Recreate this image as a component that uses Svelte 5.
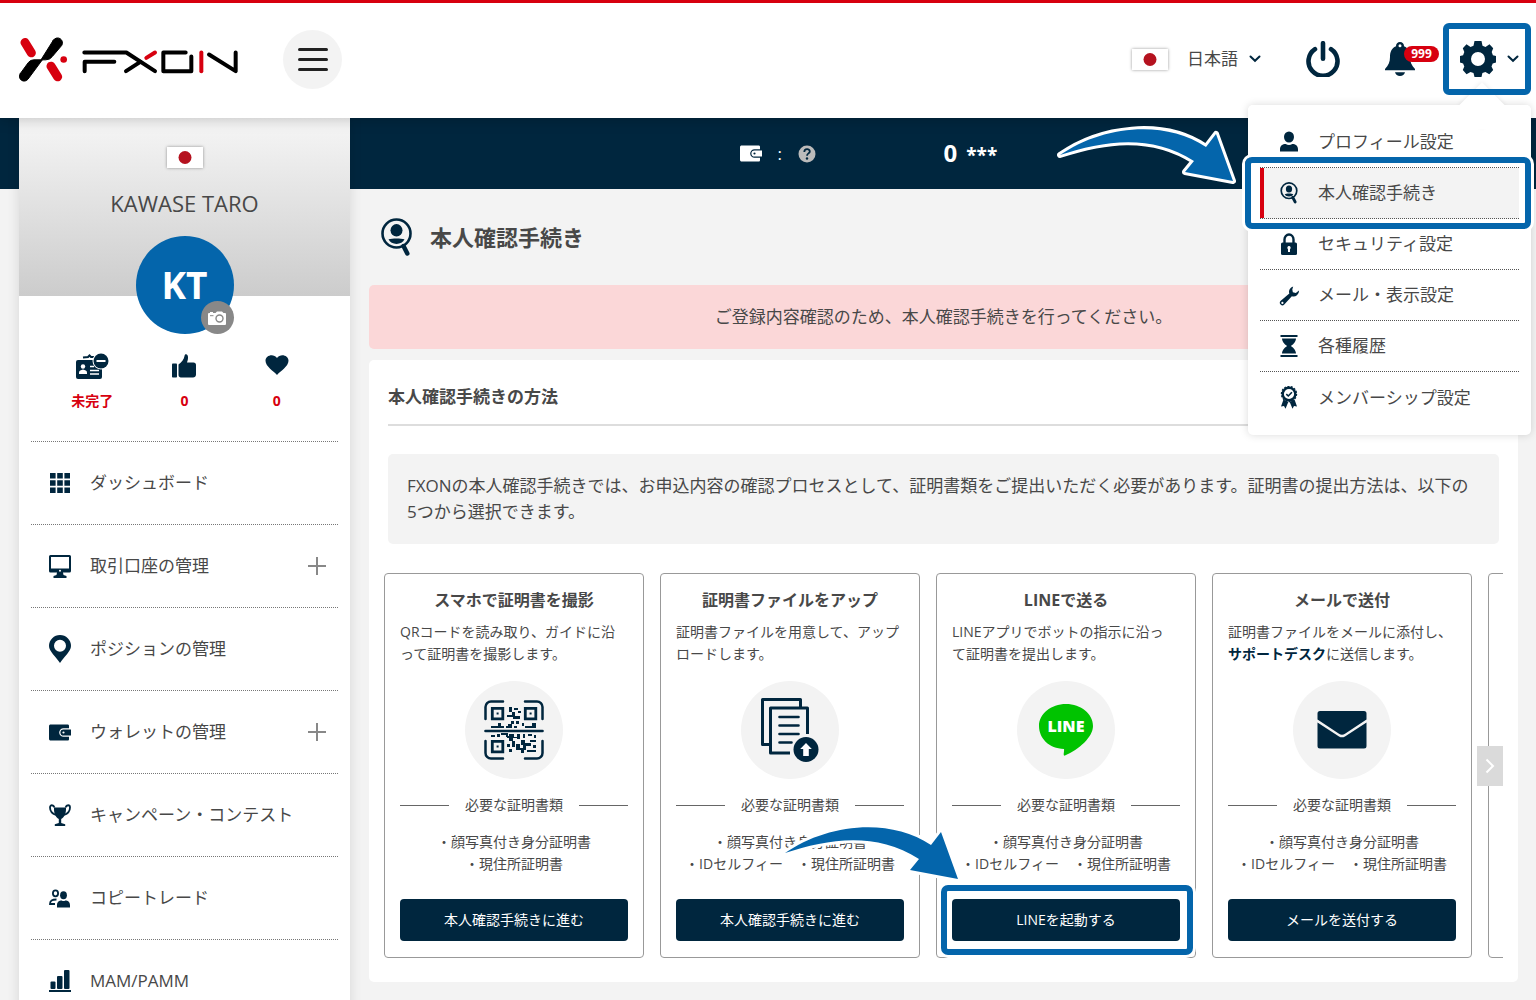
<script>
  let menuOpen = $state(true);
  let language = $state('ja');

  const settingsItems = [
    { icon: 'person', label: 'プロフィール設定' },
    { icon: 'verify', label: '本人確認手続き', active: true },
    { icon: 'lock', label: 'セキュリティ設定' },
    { icon: 'wrench', label: 'メール・表示設定' },
    { icon: 'hourglass', label: '各種履歴' },
    { icon: 'award', label: 'メンバーシップ設定' },
  ];

  const stats = [
    { icon: 'idcard', value: '未完了' },
    { icon: 'thumb', value: '0' },
    { icon: 'heart', value: '0' },
  ];

  const navItems = [
    { icon: 'grid', label: 'ダッシュボード' },
    { icon: 'monitor', label: '取引口座の管理', expandable: true },
    { icon: 'pin', label: 'ポジションの管理' },
    { icon: 'wallet', label: 'ウォレットの管理', expandable: true },
    { icon: 'trophy', label: 'キャンペーン・コンテスト' },
    { icon: 'people', label: 'コピートレード' },
    { icon: 'chart', label: 'MAM/PAMM' },
  ];

  const methods = [
    {
      icon: 'qr',
      title: 'スマホで証明書を撮影',
      text: 'QRコードを読み取り、ガイドに沿って証明書を撮影します。',
      docs: ['・顔写真付き身分証明書', '・現住所証明書'],
      action: '本人確認手続きに進む',
    },
    {
      icon: 'files',
      title: '証明書ファイルをアップ',
      text: '証明書ファイルを用意して、アップロードします。',
      docs: ['・顔写真付き身分証明書', '・IDセルフィー　・現住所証明書'],
      action: '本人確認手続きに進む',
    },
    {
      icon: 'line',
      title: 'LINEで送る',
      text: 'LINEアプリでボットの指示に沿っ\nて証明書を提出します。',
      docs: ['・顔写真付き身分証明書', '・IDセルフィー　・現住所証明書'],
      action: 'LINEを起動する',
      highlight: true,
    },
    {
      icon: 'mail',
      title: 'メールで送付',
      text: '証明書ファイルをメールに添付し、',
      link: 'サポートデスク',
      textAfter: 'に送信します。',
      docs: ['・顔写真付き身分証明書', '・IDセルフィー　・現住所証明書'],
      action: 'メールを送付する',
    },
  ];

  function scrollCards(direction) {
    const track = document.querySelector('.cards');
    track.scrollBy({ left: direction * track.clientWidth, behavior: 'smooth' });
  }
</script>

{#snippet flag()}
  <svg class="flag" viewBox="0 0 36 21" width="36" height="21" aria-hidden="true">
    <rect width="36" height="21" fill="#fff" />
    <circle cx="18" cy="10.5" r="6.5" fill="#b5121f" />
  </svg>
{/snippet}

{#snippet chevron()}
  <svg viewBox="0 0 12 8" width="12" height="8" aria-hidden="true">
    <path d="M1.5 1.5 6 5.8 10.5 1.5" fill="none" stroke="#00263e" stroke-width="2" stroke-linecap="round" />
  </svg>
{/snippet}

{#snippet arrow()}
  <svg class="arrow" viewBox="0 0 184 64" width="184" height="64" aria-hidden="true">
    <path
      d="M5 31C45 3 108-6 151 23L161 10 178 57 130 48 139 37C95 9 48 17 5 31Z"
      fill="#0465ab" stroke="#fff" stroke-width="6" stroke-linejoin="round" paint-order="stroke" />
  </svg>
{/snippet}

{#snippet icon(name, size)}
  {#if name === 'person'}
    <svg viewBox="0 0 20 22" width={size} height={size}>
      <ellipse cx="10" cy="6" rx="5" ry="5.6" />
      <path d="M1 20.5v-2.2c0-3.6 2.6-5.3 5.7-5.3 2 1.4 4.6 1.4 6.6 0 3.1 0 5.7 1.7 5.7 5.3v2.2Z" />
    </svg>
  {:else if name === 'verify'}
    <svg viewBox="0 0 31 39" width={size} height={size}>
      <circle cx="15.5" cy="15.5" r="13.8" fill="none" stroke="currentColor" stroke-width="3" />
      <ellipse cx="15.5" cy="12.5" rx="5.5" ry="6.3" />
      <path d="M8 22.3c2-2.3 13-2.3 15 0-2 4.7-13 4.7-15 0Z" />
      <path d="M22 27l4.5 8.5" stroke="currentColor" stroke-width="5" stroke-linecap="round" />
    </svg>
  {:else if name === 'lock'}
    <svg viewBox="0 0 18 22" width={size} height={size}>
      <path d="M4.5 11V6.5a4.5 5 0 0 1 9 0V11" fill="none" stroke="currentColor" stroke-width="2.4" />
      <rect x="1" y="9.5" width="16" height="12.5" rx="1.5" />
      <path d="M9 13a1.8 1.8 0 0 0-1 3.2V19h2v-2.8A1.8 1.8 0 0 0 9 13Z" fill="#fff" />
    </svg>
  {:else if name === 'wrench'}
    <svg viewBox="0 0 20 20" width={size} height={size}>
      <path fill-rule="evenodd" d="M13.8 2.2a5 5 0 0 0-3.5 6.5L2.5 15.3a2.3 2.3 0 1 0 3.2 3.3l6.9-7.5a5 5 0 0 0 6.5-5.2l-2.9 2.3-2.7-.7-.5-2.4ZM4 16.2a1 1 0 1 1 0 2 1 1 0 0 1 0-2Z" />
    </svg>
  {:else if name === 'hourglass'}
    <svg viewBox="0 0 18 22" width={size} height={size}>
      <path d="M.5 0h17v2H.5ZM.5 20h17v2H.5ZM2 3.5h14c-.3 4-3 5.8-5 7.5 2 1.7 4.7 3.5 5 7.5H2c.3-4 3-5.8 5-7.5C5 9.3 2.3 7.5 2 3.5Z" />
    </svg>
  {:else if name === 'award'}
    <svg viewBox="0 0 18 23" width={size} height="23">
      <circle cx="9" cy="8" r="6.3" fill="none" stroke="currentColor" stroke-width="2.4" />
      <circle cx="9" cy="8" r="7.6" fill="none" stroke="currentColor" stroke-width="1.2" stroke-dasharray="2 1.4" />
      <path d="M6.3 8.2 8.3 10l3.6-3.8" fill="none" stroke="currentColor" stroke-width="1.6" />
      <path d="M3.5 13.5 1 20.5l3-.5 1.5 2.7L8.3 16ZM14.5 13.5l2.5 7-3-.5-1.5 2.7L9.7 16Z" />
    </svg>
  {:else if name === 'idcard'}
    <svg viewBox="0 0 33 27" width="33" height="27">
      <path d="M7 4.5 12 4l1.5-1.5L15 4h3" fill="none" stroke="currentColor" stroke-width="2" />
      <rect y="7" width="26" height="19" rx="2" />
      <circle cx="25" cy="8" r="8.5" fill="#fff" />
      <circle cx="25" cy="8" r="7.5" />
      <rect x="20.5" y="7" width="9" height="2" fill="#fff" />
      <circle cx="7" cy="13.5" r="2.2" fill="#fff" />
      <path d="M3 21v-1.5c0-2 2-2.5 4-3 2 .5 4 1 4 3V21Z" fill="#fff" />
      <path d="M14 13.5h4M14 17.5h9M14 21h9" stroke="#fff" stroke-width="1.5" />
    </svg>
  {:else if name === 'thumb'}
    <svg viewBox="0 0 24 24" width="24" height="24">
      <rect y="9.5" width="5" height="14" rx=".8" />
      <path d="M6.5 10.5c3-2 5.5-5 6-8.5.2-1.7 1.2-2 2.2-1.5 2 1 1.5 5 .3 8h6.5c1.600 0 2.5 1 2.5 2.5v9.5c0 2-1.3 3-3 3H10c-2 0-3.5-.6-3.5-2.5Z" />
    </svg>
  {:else if name === 'heart'}
    <svg viewBox="0 0 24 24" width="24" height="24">
      <path d="M12 21C9 17.5.5 12.5.5 6.8.5 1.2 8.5-1 12 4c3.5-5 11.5-2.8 11.5 2.8C23.5 12.5 15 17.5 12 21Z" />
    </svg>
  {:else if name === 'grid'}
    <svg viewBox="0 0 20 20" width="20" height="20">
      <path d="M0 0h5.6v5.6H0ZM7.2 0h5.6v5.6H7.2ZM14.4 0H20v5.6h-5.6ZM0 7.2h5.6v5.6H0ZM7.2 7.2h5.6v5.6H7.2ZM14.4 7.2H20v5.6h-5.6ZM0 14.4h5.6V20H0ZM7.2 14.4h5.6V20H7.2ZM14.4 14.4H20V20h-5.6Z" />
    </svg>
  {:else if name === 'monitor'}
    <svg viewBox="0 0 22 23" width="22" height="23">
      <path fill-rule="evenodd" d="M1.5 0h19A1.5 1.5 0 0 1 22 1.5V16a1.5 1.5 0 0 1-1.5 1.5H14l.5 2.5 3 1v2h-13v-2l3-1 .5-2.5H1.5A1.5 1.5 0 0 1 0 16V1.5A1.5 1.5 0 0 1 1.5 0ZM2 2v11.5h18V2ZM11 14.8a1 1 0 1 0 0 2 1 1 0 0 0 0-2Z" />
    </svg>
  {:else if name === 'pin'}
    <svg viewBox="0 0 22 28" width="22" height="28">
      <path fill-rule="evenodd" d="M11 0a11 11 0 0 1 11 11c0 5.5-7 10.5-11 17C7 21.5 0 16.5 0 11A11 11 0 0 1 11 0ZM11 4.7a6 6 0 1 0 0 12 6 6 0 0 0 0-12Z" />
    </svg>
  {:else if name === 'wallet'}
    <svg viewBox="0 0 22 17" width="22" height="17">
      <path d="M2 .5h16.5c1 0 1.5.5 1.5 1.5v2.2h-5.5a4.3 4.3 0 0 0 0 8.6H20V15c0 1-.5 1.5-1.5 1.5H2c-1.5 0-2-.5-2-2v-12C0 1 .5.5 2 .5Z" />
      <path fill-rule="evenodd" d="M14.5 5.4H22v6.2h-7.5a3.1 3.1 0 0 1 0-6.2Zm0 2a1.1 1.1 0 1 0 0 2.2 1.1 1.1 0 0 0 0-2.2Z" />
    </svg>
  {:else if name === 'trophy'}
    <svg viewBox="0 0 22 22" width="22" height="22">
      <path d="M5 3.5h12c.3 6-1.500 9.5-4.8 11.5v4l4 1.3V22H5.8v-1.7l4-1.3v-4C6.5 13 4.7 9.5 5 3.5Z" />
      <path d="M5.5 3.5C4.5.5 1 .5 1 3.5c0 3.5 2 6 6 7.5M16.5 3.5c1-3 4.5-3 4.5 0 0 3.500-2 6-6 7.5" fill="none" stroke="currentColor" stroke-width="1.8" />
    </svg>
  {:else if name === 'people'}
    <svg viewBox="0 0 21 19" width="21" height="19">
      <ellipse cx="6.5" cy="4.3" rx="2.6" ry="3" fill="none" stroke="currentColor" stroke-width="1.8" />
      <path d="M7.5 10.5C3 10.5 1 11.5 1 15h5" fill="none" stroke="currentColor" stroke-width="1.8" />
      <ellipse cx="14.5" cy="6.3" rx="3.4" ry="4" />
      <path d="M8 18.5v-2.3c0-3.5 2.3-4.7 4.7-4.7 1.2.7 2.4.7 3.6 0 2.4 0 4.7 1.2 4.7 4.7v2.3Z" />
    </svg>
  {:else if name === 'chart'}
    <svg viewBox="0 0 22 22" width="22" height="22">
      <path d="M0 20h22v2H0Z" />
      <rect x="1.5" y="11.5" width="5" height="7.5" rx="1" />
      <rect x="8" y="6" width="5.5" height="13" rx="1" />
      <rect x="15" width="5.5" height="19" rx="1" />
    </svg>
  {:else if name === 'qr'}
    <svg viewBox="0 0 60 60" width="60" height="60">
      <g fill="none" stroke="currentColor" stroke-linecap="round">
        <path d="M1.5 19V7a5.5 5.5 0 0 1 5.5-5.5h12M41 1.5h12A5.5 5.5 0 0 1 58.5 7v12M58.5 41v12a5.5 5.5 0 0 1-5.5 5.5H41M19 58.5H7A5.5 5.5 0 0 1 1.5 53V41" stroke-width="2.5" />
        <path d="M1.5 31h57" stroke-width="2.6" />
        <path d="M8.3 8.3h10.5v10.5H8.3ZM41.3 8.3h10.5v10.5H41.3ZM8.3 41.3h10.5v10.5H8.3Z" stroke-width="2.8" />
      </g>
      <path d="M12.6 12.6h2v2h-2ZM45.6 12.6h2v2h-2ZM12.6 45.6h2v2h-2ZM25 7h3v5h-3ZM30 8h4v2h-4ZM28 12h3v4h5v3h-7v-2h-6v-2h5ZM34 11h3v2h-3ZM14 23h3v3h3v2H7v-2h7ZM24 24h3v-3h3v3h-2v4h-6v-2h2ZM32 21h3v3h-3ZM30 26h3v2h-3ZM38 23h2v3h-2ZM41 26h7v-3h4v5H41ZM7 35h4v2H7ZM13 34h3v3h-3ZM17 33h7v4h-2v-2h-5ZM25 34h5v3h3v-3h3v5h-3v-1h-4v3h-4v-3h-2v-2h2ZM39 34h2v4h-2ZM44 34h4v2h-4ZM50 35h2v3h-2ZM23 44h3v3h-3ZM25 49h3v3h-3ZM28 41h3v6h-3ZM32 44h4v4h4v5h-3v-3h-5ZM37 40h4v3h6v3h-5v4h-3v-5h-2ZM46 40h6v2h-6ZM49 45h3v3h-3ZM43 50h9v2h-9Z" />
    </svg>
  {:else if name === 'files'}
    <svg viewBox="0 0 60 64" width="60" height="64">
      <g fill="none" stroke="currentColor" stroke-width="3" stroke-linejoin="round">
        <path d="M40.5 9V1.5h-38v45H9" />
        <path d="M30 55H10.5V10h37v26" />
        <path d="M19.5 19h19M19.5 27.5h19M19.5 36h19M19.5 44.5h12" stroke-linecap="round" stroke-width="2.6" />
      </g>
      <circle cx="46" cy="51.5" r="12.5" />
      <path d="M46 45l5.8 6h-3v7h-5.6v-7h-3Z" fill="#fff" />
    </svg>
  {:else if name === 'line'}
    <svg viewBox="0 0 54 52" width="54" height="52">
      <path d="M27 0c15 0 27 9.8 27 22 0 11-14 23.5-28 29.5-2.5 1-.5-4-1-6.5C10 44.5 0 34.2 0 22 0 9.8 12 0 27 0Z" fill="#00c300" />
      <text x="27" y="28" text-anchor="middle" fill="#fff">LINE</text>
    </svg>
  {:else if name === 'mail'}
    <svg viewBox="0 0 50 38" width="50" height="38">
      <path d="M3 0h44a2.5 2.5 0 0 1 2.5 2.5V8.5L28 22.8a5.5 5.5 0 0 1-6 0L.5 8.5v-6A2.5 2.5 0 0 1 3 0Z" />
      <path d="M.5 11.5 22 25.5a6 6 0 0 0 6 0l21.5-14v23.5A2.5 2.5 0 0 1 47 37.5H3A2.5 2.5 0 0 1 .5 35Z" />
    </svg>
  {/if}
{/snippet}

<div class="app">
  <header class="header">
    <a class="logo" href="#top" aria-label="FXON">
      <svg viewBox="56 110 660 134" width="220" height="45" stroke="#000" stroke-width="12" stroke-linecap="round" stroke-linejoin="round">
        <path d="M159 119 122 178h14q13 0 20-10l28-33a14 14 0 0 0-25-16Z" fill="#000" stroke-width="3" />
        <path d="M60 219 84 186q6-8 16-8h26L83 236a14 14 0 0 1-23-17Z" fill="#000" stroke-width="3" />
        <g stroke="#d7000f" stroke-width="27">
          <line x1="74" y1="126" x2="93" y2="157" />
          <line x1="152" y1="197" x2="172" y2="229" />
        </g>
        <circle cx="190" cy="177" r="10" fill="#d7000f" stroke="none" />
        <polyline points="252,156 378,156 464,212" />
        <polyline points="342,184 253,184 253,212" />
        <line x1="377" y1="212" x2="420" y2="184" />
        <line x1="438" y1="172" x2="464" y2="156" stroke="#d7000f" />
        <polyline points="556,156 489,156 489,212 573,212 573,168" />
        <line x1="603" y1="156" x2="603" y2="212" stroke="#d7000f" />
        <polyline points="626,162 706,212 706,156" />
      </svg>
    </a>
    <button class="hamburger" aria-label="メニュー">
      <span></span><span></span><span></span>
    </button>

    <div class="tools">
      <label class="language">
        {@render flag()}
        <select bind:value={language} aria-label="言語">
          <option value="ja">日本語</option>
        </select>
        {@render chevron()}
      </label>
      <button class="tool" aria-label="ログアウト">
        <svg viewBox="0 0 34 36" width="34" height="36">
          <path d="M9 8.2a14.5 14.5 0 1 0 16 0M17 2.2v15.5" fill="none" stroke="currentColor" stroke-width="4.6" stroke-linecap="round" />
        </svg>
      </button>
      <button class="tool bell" aria-label="通知">
        <svg viewBox="0 0 30 34" width="30" height="34">
          <path fill-rule="evenodd" d="M15 0a4 4 0 0 1 4 4.3c4.5 2 6 5.7 6 10.7 0 5 1.5 8 5 12v1.2H0V27c3.5-4 5-7 5-12 0-5 1.5-8.7 6-10.7A4 4 0 0 1 15 0Zm0 2.2a1.5 1.5 0 1 0 0 3 1.5 1.5 0 0 0 0-3ZM10 30.3h10c-.5 2.2-2.5 3.7-5 3.7s-4.5-1.5-5-3.7Z" />
        </svg>
        <span class="badge">999</span>
      </button>
      <div class="settings">
        <button class="gear" aria-label="設定" aria-expanded={menuOpen} onclick={() => (menuOpen = !menuOpen)}>
          <svg viewBox="0 0 36 36" width="36" height="36">
            <path fill-rule="evenodd" d="M14.5 0h7l1 4.7 3 1.2 4-2.6 3.7 4-1.5 3.7 1.2 3.2L36 15v6.5l-3.3.9-1.2 3.1 1.7 3.5-3.9 4.2-3.9-2.3-3 1.2-.9 3.9h-7l-1-3.9-3-1.2-4 2.3-3.7-4.2 1.5-3.5-1.2-3.1L0 21.5V15l3.1-.8L4.3 11 2.8 7.3l3.7-4 4 2.6 3-1.2ZM18 11a7 7 0 1 0 0 14 7 7 0 0 0 0-14Z" />
          </svg>
          {@render chevron()}
        </button>
        {#if menuOpen}
          <nav class="menu">
            {#each settingsItems as item}
              <a class="menu-item" class:active={item.active} href="#settings">
                <span class="menu-icon">{@render icon(item.icon, 22)}</span>
                {item.label}
                {#if item.active}
                  <span class="focus-ring"></span>
                {/if}
              </a>
            {/each}
            {@render arrow()}
          </nav>
        {/if}
      </div>
    </div>
  </header>

  <div class="page">
    <aside class="sidebar">
      <div class="profile">
        {@render flag()}
        <div class="name">KAWASE TARO</div>
        <div class="avatar">
          KT
          <button class="camera" aria-label="写真を変更">
            <svg viewBox="0 0 18 14" width="18" height="14">
              <path d="M1 2h1V1h3v1h2.5L9 .5h5L15.5 2H17q1 0 1 1v10q0 1-1 1H1q-1 0-1-1V3q0-1 1-1Z" fill="#fff" />
              <circle cx="11.5" cy="7.5" r="3.5" fill="none" stroke="#888" stroke-width="1.4" />
              <path d="M2 4.7h3.5" stroke="#888" />
            </svg>
          </button>
        </div>
      </div>
      <div class="stats">
        {#each stats as stat}
          <div class="stat">
            <span class="stat-icon">{@render icon(stat.icon)}</span>
            <strong>{stat.value}</strong>
          </div>
        {/each}
      </div>
      <nav class="nav">
        {#each navItems as item}
          {#if item.expandable}
            <button class="nav-item">
              <span class="nav-icon">{@render icon(item.icon)}</span>
              {item.label}
              <svg class="plus" viewBox="0 0 18 18" width="18" height="18">
                <path d="M9 0v18M0 9h18" stroke="#888" stroke-width="2" />
              </svg>
            </button>
          {:else}
            <a class="nav-item" href="#nav">
              <span class="nav-icon">{@render icon(item.icon)}</span>
              {item.label}
            </a>
          {/if}
        {/each}
      </nav>
    </aside>

    <main class="main">
      <div class="balance">
        <div class="balance-inner">
          <div class="balance-label">
            {@render icon('wallet')}
            <span>:</span>
            <svg viewBox="0 0 18 18" width="18" height="18">
              <circle cx="9" cy="9" r="8.5" fill="#bbb" />
              <path d="M6.3 7c0-3.7 5.5-3.7 5.5-.6 0 2-2.8 2-2.8 4.3" fill="none" stroke="#00263e" stroke-width="1.8" />
              <circle cx="9" cy="13.5" r="1.2" fill="#00263e" />
            </svg>
          </div>
          <div class="balance-value"><strong>0</strong> <b>***</b></div>
        </div>
      </div>

      <h1>
        <svg viewBox="0 0 31 39" width="31" height="39">
          <circle cx="15.5" cy="15.5" r="14" fill="none" stroke="currentColor" stroke-width="2.6" />
          <ellipse cx="15.5" cy="12.3" rx="6" ry="6.2" />
          <path d="M7.5 21.3c4-1 12-1 16 0-2.5 6.2-13.5 6.2-16 0Z" />
          <path d="M22.5 28l3.8 7.5" stroke="currentColor" stroke-width="4.5" stroke-linecap="round" />
        </svg>
        本人確認手続き
      </h1>

      <div class="alert">ご登録内容確認のため、本人確認手続きを行ってください。</div>

      <section class="panel">
        <h2>本人確認手続きの方法</h2>
        <p class="info">
          FXONの本人確認手続きでは、お申込内容の確認プロセスとして、証明書類をご提出いただく必要があります。証明書の提出方法は、以下の5つから選択できます。
        </p>
        <div class="carousel">
          <div class="cards">
            {#each methods as method}
              <article class="card">
                <h3>{method.title}</h3>
                <p>{method.text}{#if method.link}<a href="#support">{method.link}</a>{method.textAfter}{/if}</p>
                <div class="circle">{@render icon(method.icon)}</div>
                <div class="docs-label">必要な証明書類</div>
                <ul>
                  {#each method.docs as doc}
                    <li>{doc}</li>
                  {/each}
                </ul>
                <div class="action">
                  <button>{method.action}</button>
                  {#if method.highlight}
                    <span class="focus-ring"></span>
                    {@render arrow()}
                  {/if}
                </div>
              </article>
            {/each}
            <article class="card"></article>
          </div>
          <button class="next" aria-label="次へ" onclick={() => scrollCards(1)}>
            <svg viewBox="0 0 10 16" width="10" height="16">
              <path d="M1.5 1.5 8 8l-6.5 6.5" fill="none" stroke="#fff" stroke-width="2" />
            </svg>
          </button>
        </div>
      </section>
    </main>
  </div>
</div>

<style>
  :global(body) {
    background: #f3f3f3;
  }

  .app {
    height: 100vh;
    overflow: hidden;
    font-family: "Open Sans", "Noto Sans CJK JP", sans-serif;
    font-size: 17px;
    line-height: 26px;
    color: #484848;
  }

  .app :global(*) {
    box-sizing: border-box;
  }

  button,
  select {
    padding: 0;
    border: 0;
    background: none;
    font: inherit;
    color: inherit;
    cursor: pointer;
  }

  a {
    color: inherit;
    text-decoration: none;
  }

  svg {
    display: block;
    flex: none;
    fill: currentColor;
  }

  /* Header */
  .header {
    position: relative;
    z-index: 2;
    display: flex;
    align-items: center;
    height: 118px;
    padding: 0 5px 3px 19px;
    border-top: 3px solid #d7000f;
    background: #fff;
    box-shadow: 0 0 14px rgba(0, 0, 0, 0.25);
  }

  .logo svg {
    fill: none;
  }

  .hamburger {
    display: flex;
    flex-direction: column;
    align-items: center;
    justify-content: center;
    gap: 7px;
    width: 59px;
    height: 59px;
    margin-left: 44px;
    border-radius: 50%;
    background: #f3f3f3;
  }

  .hamburger span {
    width: 30px;
    height: 3px;
    border-radius: 2px;
    background: #222;
  }

  .tools {
    display: flex;
    align-items: center;
    gap: 45px;
    margin-left: auto;
  }

  .flag {
    box-shadow: 0 0 3px rgba(0, 0, 0, 0.4);
  }

  .language {
    display: flex;
    align-items: center;
  }

  .language select {
    margin: 0 11px 0 19px;
    appearance: none;
  }

  .tool {
    position: relative;
    color: #00263e;
  }

  .badge {
    position: absolute;
    top: 4px;
    left: 19px;
    width: 35px;
    height: 16px;
    border-radius: 8px;
    background: #d7000f;
    color: #fff;
    font-size: 12px;
    font-weight: 700;
    line-height: 15px;
  }

  .settings {
    position: relative;
    margin-left: -17px;
  }

  .gear {
    position: relative;
    z-index: 2;
    display: flex;
    align-items: center;
    gap: 11px;
    width: 88px;
    height: 72px;
    padding-left: 11px;
    border: 6px solid #0465ab;
    border-radius: 6px;
    color: #00263e;
  }

  .menu {
    position: absolute;
    z-index: 1;
    top: 82px;
    right: 0;
    width: 283px;
    padding: 12px;
    border-radius: 5px;
    background: #fff;
    box-shadow: 0 0 8px rgba(0, 0, 0, 0.15);
  }

  .menu::before {
    content: '';
    position: absolute;
    top: -16px;
    right: 33px;
    width: 32px;
    height: 32px;
    transform: rotate(45deg);
    background: #fff;
    box-shadow: 0 0 5px rgba(0, 0, 0, 0.1);
  }

  .menu::after {
    content: '';
    position: absolute;
    top: 0;
    left: 0;
    width: 100%;
    height: 24px;
    border-radius: 5px;
    background: #fff;
  }

  .menu-item {
    position: relative;
    z-index: 1;
    display: flex;
    align-items: center;
    height: 51px;
    border-bottom: 1px dotted #555;
  }

  .menu-item:last-of-type {
    border-bottom: 0;
  }

  .menu-item.active {
    z-index: 2;
    background: #f3f3f3;
  }

  .menu-item.active::before {
    content: '';
    position: absolute;
    width: 4px;
    height: 100%;
    background: #d7000f;
  }

  .menu-icon {
    display: flex;
    justify-content: center;
    width: 58px;
    color: #00263e;
  }

  .focus-ring {
    position: absolute;
    inset: -11px -12px -11px -15px;
    border: 6px solid #0465ab;
    border-radius: 7px;
    box-shadow: 0 0 0 3px #fff;
    pointer-events: none;
  }

  .arrow {
    position: absolute;
    pointer-events: none;
  }

  .menu .arrow {
    top: 19px;
    right: 292px;
  }

  /* Page */
  .page {
    display: grid;
    grid-template-columns: 331px minmax(0, 1fr);
    gap: 19px;
    padding: 0 18px 0 19px;
    background: linear-gradient(#00263e 71px, #f3f3f3 71px);
  }

  .sidebar {
    background: #fff;
    box-shadow: 0 0 12px rgba(0, 0, 0, 0.12);
  }

  .profile {
    display: flex;
    flex-direction: column;
    align-items: center;
    height: 178px;
    padding-top: 29px;
    background: linear-gradient(#f6f6f6, #cccccc);
  }

  .name {
    margin-top: 22px;
    font-size: 22px;
  }

  .avatar {
    position: relative;
    flex: none;
    width: 98px;
    height: 98px;
    margin-top: 20px;
    border-radius: 50%;
    background: #0465ab;
    color: #fff;
    font-size: 37px;
    font-weight: 700;
    line-height: 98px;
    text-align: center;
  }

  .camera {
    position: absolute;
    right: 0;
    bottom: 0;
    display: flex;
    align-items: center;
    justify-content: center;
    width: 33px;
    height: 33px;
    border-radius: 50%;
    background: #888;
  }

  .stats {
    display: grid;
    grid-template-columns: repeat(3, 1fr);
    padding: 53px 27px 27px;
  }

  .stat {
    text-align: center;
    color: #d7000f;
    font-size: 14px;
  }

  .stat-icon {
    display: flex;
    align-items: center;
    justify-content: center;
    height: 34px;
    margin-bottom: 5px;
    color: #00263e;
  }

  .stat strong {
    display: block;
  }

  .nav {
    padding: 0 12px;
  }

  .nav-item {
    display: flex;
    align-items: center;
    width: 100%;
    height: 83px;
    border-top: 1px dotted #777;
  }

  .nav-icon {
    display: flex;
    justify-content: center;
    width: 57px;
    margin-right: 2px;
    color: #00263e;
  }

  .plus {
    margin: 0 12px 0 auto;
  }

  /* Main */
  .balance {
    height: 71px;
    color: #fff;
  }

  .balance-inner {
    display: grid;
    grid-template-columns: 1fr 1fr;
    align-items: center;
    width: 408px;
    height: 100%;
    margin: 0 auto;
  }

  .balance-label {
    display: flex;
    align-items: center;
    gap: 16px;
  }

  .balance-value {
    font-size: 19px;
  }

  .balance-value strong {
    margin-right: 4px;
    font-size: 24px;
  }

  h1,
  h2,
  h3,
  p,
  ul {
    margin: 0;
    padding: 0;
  }

  h1 {
    display: flex;
    align-items: center;
    gap: 18px;
    height: 96px;
    padding-left: 12px;
    font-size: 22px;
  }

  h1 svg {
    color: #00263e;
  }

  .alert {
    padding: 19px;
    border-radius: 5px;
    background: #fbd7d8;
    text-align: center;
  }

  .panel {
    margin-top: 11px;
    padding: 24px 15px;
    border-radius: 5px;
    background: #fff;
  }

  h2 {
    margin: 0 4px 28px;
    padding-bottom: 14px;
    border-bottom: 2px solid #ddd;
    font-size: 17px;
  }

  .info {
    margin: 0 4px 29px;
    padding: 19px 24px 19px 19px;
    border-radius: 5px;
    background: #f3f3f3;
  }

  .carousel {
    position: relative;
  }

  .cards {
    display: flex;
    gap: 16px;
    overflow: hidden;
  }

  .card {
    flex: 0 0 260px;
    height: 385px;
    padding: 15px;
    border: 1px solid #999;
    border-radius: 4px;
    font-size: 14px;
    line-height: 22px;
  }

  .card p {
    padding-right: 3px;
    white-space: pre-line;
  }

  h3 {
    margin-bottom: 10px;
    font-size: 16px;
    text-align: center;
  }

  .card a {
    color: #00263e;
    font-weight: 700;
  }

  .circle {
    display: flex;
    align-items: center;
    justify-content: center;
    width: 98px;
    height: 98px;
    margin: 16px auto 15px;
    border-radius: 50%;
    background: #f3f3f3;
    color: #00263e;
  }

  .circle text {
    font-size: 16px;
    font-weight: 800;
  }

  .docs-label {
    display: flex;
    align-items: center;
    gap: 16px;
  }

  .docs-label::before,
  .docs-label::after {
    content: '';
    flex: 1;
    border-top: 1px solid #666;
  }

  ul {
    margin: 15px 0 24px;
    list-style: none;
    text-align: center;
    white-space: nowrap;
  }

  .action {
    position: relative;
  }

  .action button {
    width: 100%;
    height: 42px;
    border-radius: 4px;
    background: #00263e;
    color: #fff;
  }

  .action .focus-ring {
    inset: -14px -13px -14px -11px;
  }

  .action .arrow {
    right: 216px;
    bottom: 55px;
  }

  .next {
    position: absolute;
    top: 173px;
    right: 0;
    display: flex;
    align-items: center;
    justify-content: center;
    width: 26px;
    height: 40px;
    background: #dadada;
  }
</style>
